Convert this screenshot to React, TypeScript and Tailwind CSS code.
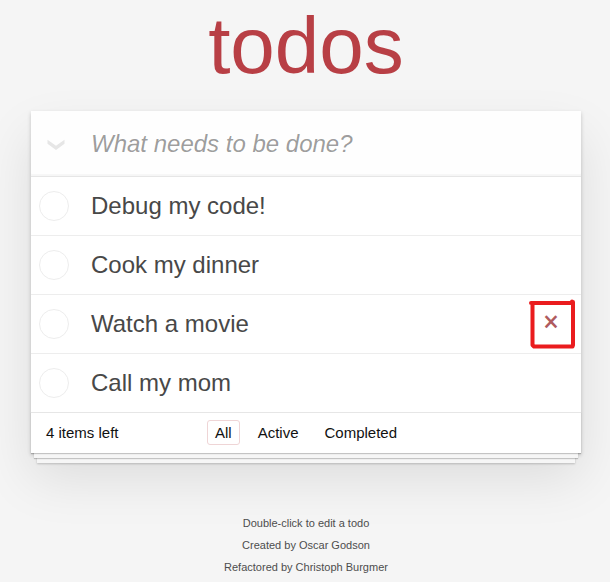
import { useState } from "react";

const initialTodos = [
  { id: 1, title: "Debug my code!" },
  { id: 2, title: "Cook my dinner" },
  { id: 3, title: "Watch a movie" },
  { id: 4, title: "Call my mom" },
];

const filters = ["All", "Active", "Completed"];

function TodoRow({ id, title, active }: { id: number; title: string; active: boolean }) {
  return (
    <li className="flex h-[59px] items-center border-b border-[#ededed] pl-2 pr-[10px] last:h-[58px] last:border-b-0">
      <input
        id={`todo-${id}`}
        type="checkbox"
        className="size-[30px] shrink-0 appearance-none rounded-full border border-[#ededed] checked:border-[#59a193]"
      />
      <label htmlFor={`todo-${id}`} className="flex-1 pb-[2px] pl-[22px] text-2xl leading-[29px]">
        {title}
      </label>
      {active && (
        <div className="relative">
          <button
            type="button"
            aria-label={`Delete ${title}`}
            className="block h-10 w-10 pb-[6px] text-center font-['Open_Sans',sans-serif] text-[28px] font-semibold leading-[34px] text-[#af5b5e]"
          >
            ×
          </button>
          <svg
            aria-hidden="true"
            className="pointer-events-none absolute -left-[3px] -top-[5px]"
            width="48"
            height="51"
            viewBox="0 0 48 51"
            fill="none"
            stroke="#ea1c1e"
            strokeWidth="4"
            strokeLinecap="round"
            strokeLinejoin="round"
          >
            <path d="M3 4H44V2.5M4.500 4V46L6 47.500H44.500L45 46V3" />
          </svg>
        </div>
      )}
    </li>
  );
}

export default function App() {
  const [filter, setFilter] = useState("All");

  return (
    <div className="min-h-screen bg-[#f5f5f5] pb-1 pl-[31px] pr-[29px] font-['Liberation_Sans',Arial,sans-serif] text-[#484848]">
      <div className="mx-auto max-w-[550px]">
        <h1 className="pb-[19px] text-center text-[80px] leading-[92px] text-[#b83f45]">todos</h1>

        <section className="bg-white shadow-[0_2px_4px_0_rgba(0,0,0,0.2),0_25px_50px_0_rgba(0,0,0,0.1)]">
          <header className="flex h-[65px] items-center bg-[#fefefe] shadow-[inset_0_-2px_1px_rgba(0,0,0,0.03)]">
            <button type="button" aria-label="Mark all as complete" className="flex w-[60px] shrink-0 pl-4 pt-[2px]">
              <svg width="18" height="12" viewBox="0 0 18 12" fill="#e6e6e6" aria-hidden="true">
                <path d="M0.500 0.800L9 6.800L17.500 0.800V4.800L9 11L0.500 4.800Z" />
              </svg>
            </button>
            <input
              type="text"
              aria-label="New todo"
              placeholder="What needs to be done?"
              className="h-full min-w-0 flex-1 bg-transparent text-2xl outline-none placeholder:italic placeholder:text-black/40"
            />
          </header>

          <ul className="border-t border-[#e6e6e6]">
            {initialTodos.map((todo) => (
              <TodoRow key={todo.id} id={todo.id} title={todo.title} active={todo.id === 3} />
            ))}
          </ul>

          <footer className="grid h-[41px] grid-cols-[1fr_auto_1fr] items-center border-t border-[#e6e6e6] px-[15px] pb-[2px] text-[15px] leading-[17px] text-[#111111] shadow-[0_1px_1px_rgba(0,0,0,0.2),0_8px_0_-3px_#f6f6f6,0_9px_1px_-3px_rgba(0,0,0,0.2),0_16px_0_-6px_#f6f6f6,0_17px_2px_-6px_rgba(0,0,0,0.2)]">
            <span>4 items left</span>
            <nav aria-label="Filters" className="flex gap-[10px]">
              {filters.map((name) => (
                <a
                  key={name}
                  href={`#${name}`}
                  onClick={() => setFilter(name)}
                  className={
                    filter === name
                      ? "rounded-[3px] border border-[#efd5d6] px-[7px] py-[3px]"
                      : "rounded-[3px] border border-transparent px-[7px] py-[3px]"
                  }
                >
                  {name}
                </a>
              ))}
            </nav>
          </footer>
        </section>

        <footer className="pt-[59px] text-center text-[11px] leading-[22px] text-[#4d4d4d]">
          <p>Double-click to edit a todo</p>
          <p>Created by Oscar Godson</p>
          <p>Refactored by Christoph Burgmer</p>
        </footer>
      </div>
    </div>
  );
}
